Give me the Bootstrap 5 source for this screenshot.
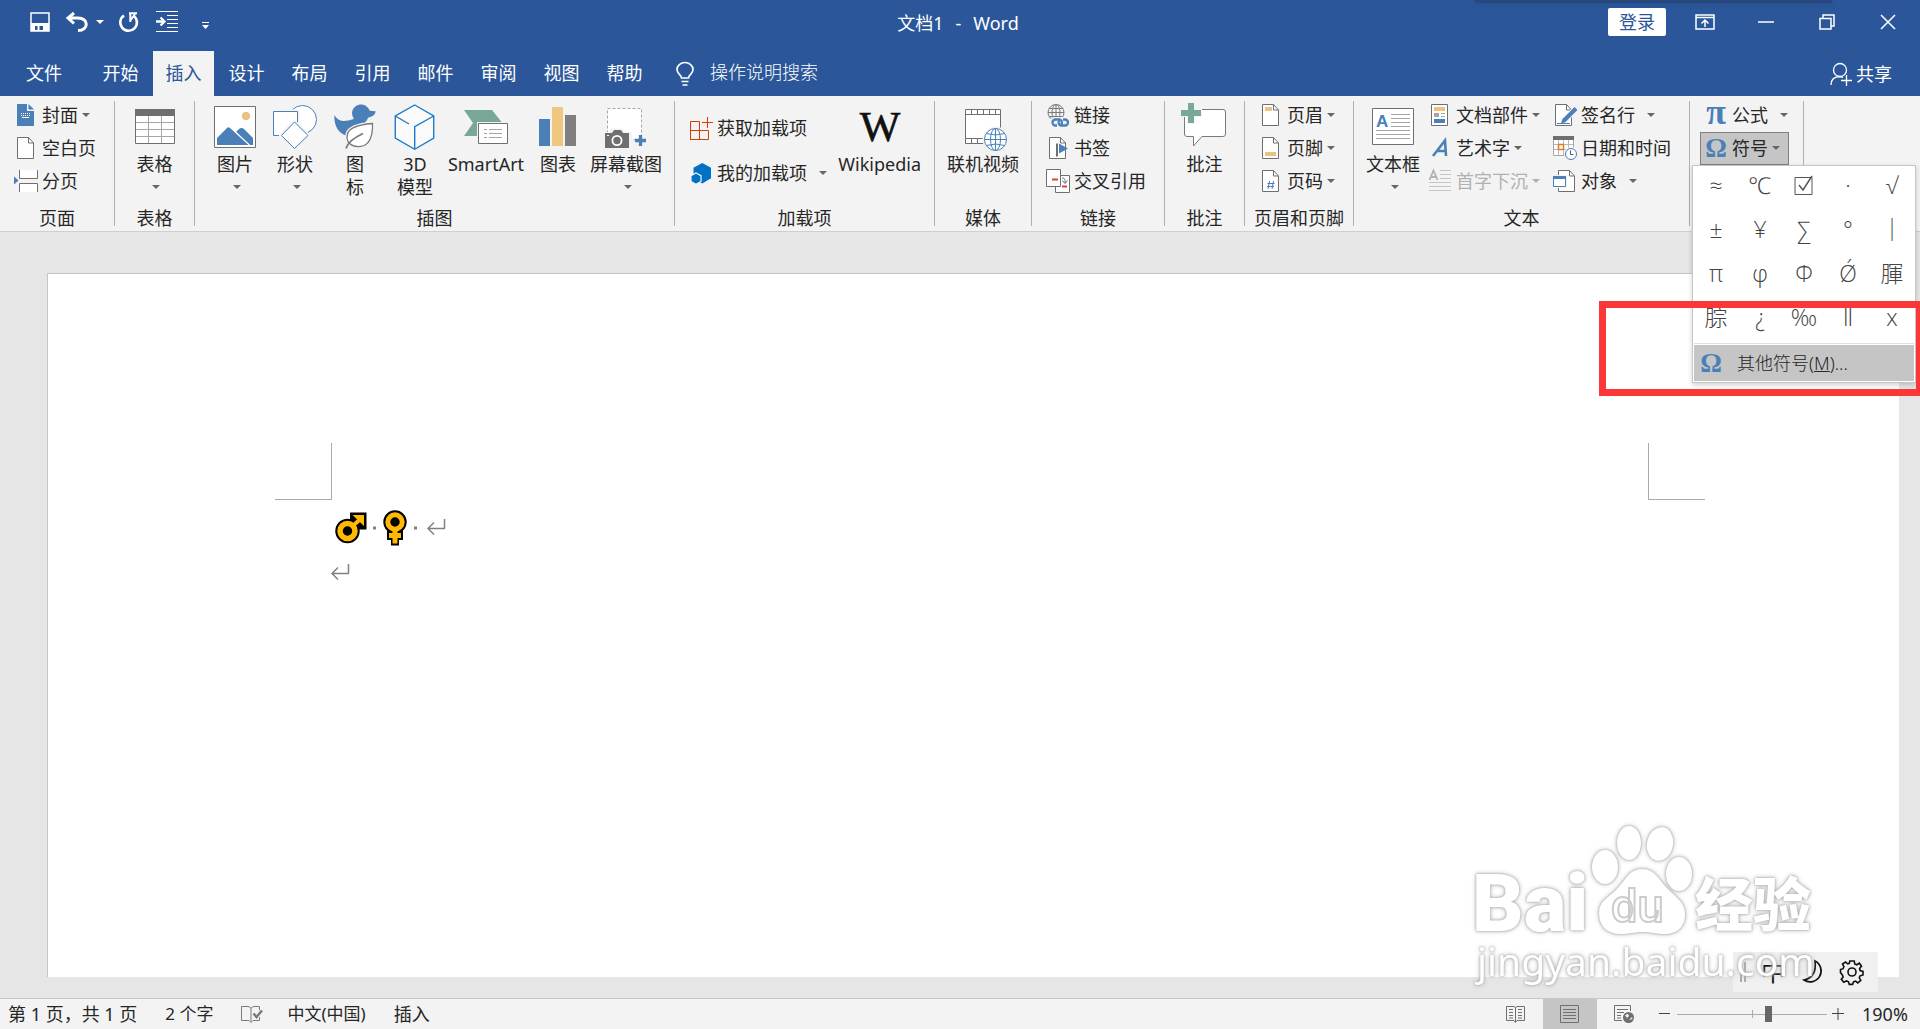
<!DOCTYPE html>
<html lang="zh-CN">
<head>
<meta charset="utf-8">
<meta name="viewport" content="width=device-width, initial-scale=1">
<title>文档1 - Word</title>
<link href="https://cdn.jsdelivr.net/npm/bootstrap@5.3.0/dist/css/bootstrap.min.css" rel="stylesheet">
<style>
:root{--word:#2b579a;--ink:#262626;--acc:#4a7fb8;--line:#6f6f6f}
body{font-family:"Noto Sans","Noto Sans CJK SC",sans-serif;font-size:18px;line-height:24px;color:var(--ink);background:#e6e6e6;overflow:hidden}
button{color:inherit;font:inherit}
svg{display:block;flex:none;overflow:visible}
.plain{background:none;border:0;padding:0}
.titlebar{background:var(--word);color:#fff;height:51px}
.quick{padding-left:30px;height:44px}
.caret{width:0;height:0;flex:none;border:4px solid transparent;border-top-color:#666;border-bottom:0}
.caret.light{border-top-color:#fff}
.doctitle{line-height:46px;padding-right:4px}
.signin{background:#fff;color:var(--word);border:0;border-radius:2px;width:58px;height:28px;padding:0;line-height:28px}
.winbtn{width:61px;height:44px}
.winbtns{padding-right:2px}
.topshade{position:absolute;top:0;right:88px;width:357px;height:3px;background:#26487c;box-shadow:0 0 4px #26487c}
.tabs{background:var(--word);color:#fff;height:45px}
.tabs .nav{gap:2px}
.tabs .nav-link{color:#fff;width:61px;padding:0;text-align:center;border-radius:0;line-height:45px}
.tabs .filetab{width:88px}
.tabs .nav-link.active{background:#f3f3f3;color:var(--word)}
.tellme{margin-left:5px}
.tellme input{background:none;border:0;color:#fff;padding:0 0 3px;width:180px;font-weight:300}
.tellme input::placeholder{color:#fff;opacity:1}
.share{margin-right:28px}
.ribbon{background:#f3f3f3;border-bottom:1px solid #cfcfcf;height:136px;padding-top:3px}
.grp{position:relative;border-right:1px solid transparent}
.grp::after{content:"";position:absolute;right:-1px;top:2px;height:125px;width:1px;background:#b0b0b0}
.gbody{height:111px}
.glabel{text-align:center;line-height:16px}
.cmd{display:flex;align-items:center;gap:4px;height:33px;padding-bottom:2px!important;white-space:nowrap}
.cmd svg{margin-top:2px}
.cmd.tall{height:45px}
.addins{padding-top:7px}
.cmd.off{color:#b1b1b1}
.cmd.off .caret{border-top-color:#b1b1b1}
.cmd.gapped .caret{margin-left:8px}
.big{display:flex;flex-direction:column;align-items:center;line-height:23px;white-space:nowrap}
.big .pic{height:54px;display:flex;align-items:center}
.big .caret{margin:9px 0 0 3px}
.wiki{margin:0 13px 0 auto}
.g-page{width:115px}.g-table{width:80px}.g-illus{width:480px}.g-addin{width:260px}.g-media{width:97px}
.g-link{width:133px}.g-note{width:80px}.g-head{width:109px}.g-text{width:336px}.g-sym{width:114px}
.w60{width:60px}.w62{width:62px}.w74{width:74px}.w82{width:82px}.w70{width:70px}
.in10{padding-left:10px}.in14{padding-left:14px}
.textcol{width:125px}
.symcmd{border:1px solid transparent;padding:0 8px 0 5px}
.symcmd.open{background:#c5c5c5;border-color:#808080}
.symmenu{position:absolute;left:-8px;top:33px;width:224px;z-index:5;background:#fff;border:1px solid #c6c6c6;padding:1px;box-shadow:0 2px 5px rgba(0,0,0,.18)}
.symgrid{display:grid;grid-template-columns:repeat(5,1fr);font-family:"Open Sans","Noto Sans","Noto Sans CJK SC",sans-serif}
.symgrid button{height:44px;font-size:23px;font-weight:300;color:#444;line-height:32px;padding-bottom:8px}
.moresym{border-top:1px solid #e1e1e1;padding-top:1px}
.moresym button{background:#c5c5c5;height:36px;width:100%;padding-left:7px;gap:14px;font-weight:300}
.redbox{position:absolute;left:1599px;top:301px;width:324px;height:95px;border:7px solid #fc3737;z-index:9;pointer-events:none}
.desk{padding:41px 21px 21px 47px}
.sheet{background:#fff;border:solid #c6c6c6;border-width:1px 0 0 1px;padding-top:169px}
.corners{padding:0 194px 0 227px}
.corner{width:57px;height:57px;border-bottom:1px solid #ababab;--bs-border-color:#ababab}
.typed{padding:5px 0 0 287px}
.para{height:45px;display:flex;align-items:center}
.outdent{margin-left:-4px}
.statusbar{background:#f3f3f3;border-top:1px solid #c6c6c6;height:31px;line-height:28px;padding-left:8px}
.statusbar .narrow{font-size:17px}
.gapl{margin-left:28px}
.view{width:54px;height:30px;display:flex;align-items:center;justify-content:center}
.view.active{background:#c5c5c5}
.zoomer{-webkit-appearance:none;appearance:none;width:150px;height:16px;margin:0 5px 0 6px;background:linear-gradient(#ababab,#ababab) 75px 4px/1px 8px no-repeat,linear-gradient(#ababab,#ababab) 0 8px/100% 1px no-repeat}
.zoomer::-webkit-slider-thumb{-webkit-appearance:none;width:7px;height:16px;background:#666}
.pct{width:76px;padding-left:18px}
.ime{position:absolute;right:42px;bottom:37px;width:145px;height:40px;background:#f0f0f0;color:#111}
.ime .bars{width:6px;height:20px;border:solid #aaa;border-width:0 2px;margin-left:7px}
.ime .zh{font-size:24px;margin:0 17px 0 15px}
.ime .gear{margin-left:14px}
.wm{position:absolute;right:80px;bottom:29px;pointer-events:none;filter:drop-shadow(0 0 1px #aaa) drop-shadow(0 0 2px #bbb)}
</style>
<script src="https://cdn.jsdelivr.net/npm/bootstrap@5.3.0/dist/js/bootstrap.bundle.min.js"></script>
</head>
<body class="vh-100 d-flex flex-column position-relative">
<svg width="0" height="0" class="position-absolute">
<symbol id="sheet" viewBox="0 0 24 23" overflow="visible"><path d="M3.5.5h11l5 5.5v15.500h-16z" fill="#fff" stroke="#6f6f6f"/><path d="M14.500.5v5.500h5" fill="none" stroke="#6f6f6f"/></symbol>
<symbol id="ret" viewBox="0 0 19 17"><path d="M17.500 0v9.500M1 9.500h17M7 3.500l-6 6 6 6" fill="none" stroke="#808080" stroke-width="1.500"/></symbol>
</svg>

<header class="titlebar d-flex align-items-start position-relative">
  <div class="topshade"></div>
  <div class="quick d-flex align-items-center gap-3 flex-fill w-25">
    <button class="plain" aria-label="保存"><svg width="20" height="20"><path d="M1 1h18v18H1z" fill="none" stroke="#fff" stroke-width="1.500"/><path d="M1 11h18v8H1z" fill="#fff"/><path d="M5 14h8v4H5z" fill="#2b579a"/><path d="M7.500 14h2v4h-2z" fill="#fff"/></svg></button>
    <div class="d-flex align-items-center gap-2">
    <button class="plain" aria-label="撤消"><svg width="22" height="20"><path d="M8 1L2 6l6 5.500M2.500 6h9.500c11 0 11 12.500 0 12.500" fill="none" stroke="#fff" stroke-width="3"/></svg></button><span class="caret light"></span></div>
    <button class="plain" aria-label="重复"><svg width="20" height="20"><path d="M4 3.500a8.300 8.300 0 1 0 9.500.2" fill="none" stroke="#fff" stroke-width="2.600"/><path d="M9 1.300h8M10.300 1v9M10 9l5-7" fill="none" stroke="#fff" stroke-width="2"/></svg></button>
    <button class="plain" aria-label="缩进"><svg width="22" height="22"><path d="M0 .5h22M11 4.500h11M11 8.500h11M11 12.500h11M11 16.500h11M0 20.500h22" stroke="#fff"/><path d="M0 10.500h8M4.500 6.500l4 4-4 4" fill="none" stroke="#fff" stroke-width="2.300"/></svg></button>
    <button class="plain ms-2 mt-2" aria-label="自定义快速访问工具栏"><svg width="8" height="8"><path d="M0 .5h7" stroke="#fff"/><path d="M0 3h7L3.500 7z" fill="#fff"/></svg></button>
  </div>
  <div class="doctitle d-flex gap-2"><span>文档1</span><span class="px-1">-</span><span>Word</span></div>
  <div class="winbtns d-flex justify-content-end flex-fill w-25">
    <button class="signin me-2 mt-2">登录</button>
    <button class="plain winbtn d-flex justify-content-center align-items-center" aria-label="功能区显示选项"><svg width="20" height="16"><path d="M1 1h18v14H1zM1 3.500h18M10 13V6.500M6.500 9.500L10 6l3.500 3.500" fill="none" stroke="#fff" stroke-width="1.500"/></svg></button>
    <button class="plain winbtn d-flex justify-content-center align-items-center" aria-label="最小化"><svg width="16" height="2"><path d="M0 1h16" stroke="#fff" stroke-width="1.500"/></svg></button>
    <button class="plain winbtn d-flex justify-content-center align-items-center" aria-label="还原"><svg width="16" height="16"><path d="M1 4.500h11V15H1zM4 4V1h11v11h-3" fill="none" stroke="#fff" stroke-width="1.500"/></svg></button>
    <button class="plain winbtn d-flex justify-content-center align-items-center" aria-label="关闭"><svg width="16" height="16"><path d="M1 1l14 14M15 1L1 15" stroke="#fff" stroke-width="1.500"/></svg></button>
  </div>
</header>

<nav class="tabs d-flex align-items-center">
  <div class="nav flex-nowrap">
    <a class="nav-link filetab" href="#">文件</a><a class="nav-link" href="#">开始</a><a class="nav-link active" href="#">插入</a><a class="nav-link" href="#">设计</a><a class="nav-link" href="#">布局</a><a class="nav-link" href="#">引用</a><a class="nav-link" href="#">邮件</a><a class="nav-link" href="#">审阅</a><a class="nav-link" href="#">视图</a><a class="nav-link" href="#">帮助</a>
  </div>
  <div class="tellme d-flex align-items-center gap-3 ps-3">
    <svg width="18" height="24"><path d="M5.500 16c0-3-4.500-4-4.500-8.500a8 7 0 0 1 16 0c0 4.500-4.500 5.500-4.500 8.500zM5.500 19.500h7M6.500 23h5" fill="none" stroke="#fff" stroke-width="1.700"/></svg>
    <input type="text" placeholder="操作说明搜索" aria-label="操作说明搜索">
  </div>
  <button class="plain share ms-auto d-flex align-items-center gap-1"><svg width="22" height="24"><circle cx="10" cy="8" r="6.500" fill="none" stroke="#fff" stroke-width="1.300"/><path d="M1 23c0-5 3-8 8-8.500 2 0 3 .5 4 1M16.500 13v11M11 18.500h11" fill="none" stroke="#fff" stroke-width="1.300"/></svg>共享</button>
</nav>

<section class="ribbon d-flex align-items-start">
  <div class="grp g-page"><div class="gbody in14">
    <button class="plain cmd"><svg width="24" height="23"><path d="M3 0h10v7h7v15H3z" fill="#4a7fb8"/><path d="M14.500 0l5.500 5.500h-5.500z" fill="#4a7fb8"/><path d="M7 9.500h9M7 11.500h9" stroke="#fff" stroke-dasharray="1 1"/><path d="M8 13.500h7" stroke="#fff"/></svg>封面<span class="caret"></span></button>
    <button class="plain cmd"><svg width="24" height="23"><use href="#sheet"/></svg>空白页</button>
    <button class="plain cmd"><svg width="24" height="23"><path d="M0 6.500l4.500 4-4.500 4z" fill="#4a7fb8"/><path d="M5.500 0v8.500h18V0M5.500 22v-8.500h18V22" fill="#fff" stroke="#6f6f6f"/></svg>分页</button>
  </div><div class="glabel">页面</div></div>

  <div class="grp g-table"><div class="gbody">
    <button class="plain big mx-auto"><span class="pic"><svg width="46" height="46"><path d="M3.500 6.500h39v34h-39z" fill="#fff" stroke="#6f6f6f"/><path d="M3 6h40v7H3z" fill="#6f6f6f"/><path d="M16.500 13v27M29.500 13v27M4 19.500h38M4 26.500h38M4 33.500h38" stroke="#a6a6a6"/></svg></span>表格<span class="caret"></span></button>
  </div><div class="glabel">表格</div></div>

  <div class="grp g-illus"><div class="gbody in10 d-flex">
    <button class="plain big w60"><span class="pic"><svg width="46" height="46"><path d="M2.500 3.500h41v41h-41z" fill="#fff" stroke="#6f6f6f"/><circle cx="34" cy="13" r="4.200" fill="#eac282"/><path d="M5 42v-7l10-10q1.500-1.500 3 0l18.500 17z" fill="#4a7fb8"/><path d="M24 29l3-3q2.500-2 5 0l9 9v7h-3z" fill="#4a7fb8"/><path d="M24 29l13.500 13" stroke="#fff"/></svg></span>图片<span class="caret"></span></button>
    <button class="plain big w60"><span class="pic"><svg width="46" height="46"><circle cx="30.500" cy="16.500" r="14" fill="#fff" stroke="#4a7fb8"/><path d="M1.500 8.500h24v24h-24z" fill="#fff" stroke="#f3f3f3" stroke-width="4"/><path d="M1.500 8.500h24v24h-24z" fill="#fff" stroke="#4a7fb8"/><path d="M22.500 19L36 32.500 22.500 45.500 9.500 32.500z" fill="#fff" stroke="#f3f3f3" stroke-width="4"/><path d="M22.500 19L36 32.500 22.500 45.500 9.500 32.500z" fill="#fff" stroke="#4a7fb8"/></svg></span>形状<span class="caret"></span></button>
    <button class="plain big w60"><span class="pic"><svg width="46" height="46"><path d="M20 10a9 9 0 0 1 17.500-2.500q3 1 6.300.8-1 5-7.800 6.500-.5 2-2.500 4L27 33H15Q2 29 2.300 12q3 5.500 9 6 5 0 10.500-2Q20 13 20 10z" fill="#4a7fb8"/><path d="M40.500 20.500q-23 2-25 10.500-1.500 6 2 9.500 6 5 14.500 2 9-4 8.500-22z" fill="#fff" stroke="#f3f3f3" stroke-width="4"/><path d="M40.500 20.500q-23 2-25 10.500-1.500 6 2 9.500 6 5 14.500 2 9-4 8.500-22z" fill="#fff" stroke="#7a7a7a" stroke-width="1.300"/><path d="M14 45.500q2-8 17-15" fill="none" stroke="#7a7a7a" stroke-width="1.800"/></svg></span><span>图<br>标</span></button>
    <button class="plain big w60"><span class="pic"><svg width="46" height="46"><path d="M22.700 2l19 11v22l-19 11.300L3.300 35V13z" fill="#fafafa" stroke="#1e7cc8" stroke-width="1.400"/><path d="M41.700 13l-19 10.700V46M3.300 13L17 21" fill="none" stroke="#1e7cc8" stroke-width="1.400"/></svg></span><span>3D<br>模型</span></button>
    <button class="plain big w82"><span class="pic"><svg width="46" height="46"><path d="M1 7h28l10 12.500L29 33H1l9-13z" fill="#78a896"/><path d="M15.500 20.500h29v20h-29z" fill="#fff" stroke="#f3f3f3" stroke-width="3"/><path d="M15.500 20.500h29v20h-29z" fill="#fff" stroke="#6f6f6f"/><path d="M21 26.500h3M26 26.500h13M21 30.500h3M26 30.500h13M21 34.500h3M26 34.500h13" stroke="#a6a6a6"/></svg></span>SmartArt</button>
    <button class="plain big w62"><span class="pic"><svg width="46" height="46"><path d="M4 16h11v27H4z" fill="#4a7fb8"/><path d="M17 4h11v39H17z" fill="#efc77e"/><path d="M30 12h11v31H30z" fill="#7f7f7f"/></svg></span>图表</button>
    <button class="plain big w74"><span class="pic"><svg width="46" height="46"><path d="M4.500 5.500h34v31h-34z" fill="#fff" stroke="#a6a6a6" stroke-dasharray="3 2"/><path d="M1 29h5l2-3.500h12l2 3.500h7v17H1z" fill="#f3f3f3"/><path d="M2 30h7l2-3h7l2 3h6v15H2z" fill="#6f6f6f"/><circle cx="14" cy="37.500" r="4.600" fill="none" stroke="#fff" stroke-width="1.800"/><path d="M4 32.500h2" stroke="#fff"/><path d="M32 37.500h11M37.500 32v11" stroke="#4a7fb8" stroke-width="3.300"/></svg></span>屏幕截图<span class="caret"></span></button>
  </div><div class="glabel">插图</div></div>

  <div class="grp g-addin"><div class="gbody in14 d-flex">
    <div class="addins">
      <button class="plain cmd tall"><svg width="24" height="24"><path d="M1.500 4.500h9v18h-9zM1.500 13.500h18v9h-18z" fill="none" stroke="#d83b01"/><path d="M18.500 0v11M13 5.500h11" stroke="#d83b01"/></svg>获取加载项</button>
      <button class="plain cmd tall gapped"><svg width="24" height="24"><path d="M13.300 1l8.700 4.700v10.600L13.300 21.500 4.500 16.500V5.700z" fill="#0072c6"/><path d="M7 11l5 2.700v5.800L7 22.300l-5-2.800v-5.800z" fill="#0072c6" stroke="#f3f3f3" stroke-width="1.200"/></svg>我的加载项<span class="caret"></span></button>
    </div>
    <button class="plain big wiki"><span class="pic"><svg width="46" height="46"><text x="23" y="38" text-anchor="middle" font-family="Liberation Serif" font-size="43" fill="#111" stroke="#111" stroke-width=".6">W</text></svg></span>Wikipedia</button>
  </div><div class="glabel">加载项</div></div>

  <div class="grp g-media"><div class="gbody">
    <button class="plain big mx-auto"><span class="pic"><svg width="46" height="46"><path d="M5.500 6.500h35v34h-35z" fill="#fff" stroke="#6f6f6f"/><path d="M5 11.500h36M5 35.500h36M11.500 6v5M17.500 6v5M23.500 6v5M29.500 6v5M35.500 6v5M11.500 36v5M17.500 36v5" stroke="#6f6f6f"/><circle cx="35.500" cy="36.500" r="13" fill="#f3f3f3"/><g fill="#fff" stroke="#4a7fb8"><circle cx="35.500" cy="36.500" r="11"/><ellipse cx="35.500" cy="36.500" rx="5" ry="11"/><path d="M24.500 36.500h22M35.500 25.500v22M26.500 30.500q9 3 18 0M26.500 42.500q9-3 18 0" fill="none"/></g></svg></span>联机视频</button>
  </div><div class="glabel">媒体</div></div>

  <div class="grp g-link"><div class="gbody in14">
    <button class="plain cmd"><svg width="24" height="23"><g fill="none" stroke="#7a7a7a"><circle cx="10" cy="8.500" r="8"/><ellipse cx="10" cy="8.500" rx="4" ry="8"/><path d="M2 8.500h16M10 .5v16M3 4.500h14M3 12.500h14"/></g><rect x="4" y="13" width="20" height="11" rx="5" fill="#f3f3f3"/><path d="M11 21.500H9.500a3 3 0 0 1 0-6H14a3 3 0 0 1 1 5M17 15.500h2a3 3 0 0 1 0 6h-4.500a3 3 0 0 1-1-5" fill="none" stroke="#4a7fb8" stroke-width="2.300"/></svg>链接</button>
    <button class="plain cmd"><svg width="24" height="23"><use href="#sheet"/><path d="M11 6.500v13" stroke="#6f6f6f" stroke-width="2"/><path d="M13 6.500l9 5-9 5z" fill="#4a7fb8"/></svg>书签</button>
    <button class="plain cmd"><svg width="24" height="23"><path d="M9.500 5.500h14v17h-14z" fill="#fff" stroke="#6f6f6f"/><path d="M.5-.5h14v17H.5z" fill="#fff" stroke="#6f6f6f"/><path d="M6 9.500h6M16 16.500h5" stroke="#d2472f" stroke-width="2"/><path d="M16 8q4 0 3 5M16.500 10.500l2.500 3 2.500-3" fill="none" stroke="#6f6f6f"/></svg>交叉引用</button>
  </div><div class="glabel">链接</div></div>

  <div class="grp g-note"><div class="gbody">
    <button class="plain big mx-auto"><span class="pic"><svg width="46" height="46"><path d="M5 6.500h36q2.500 0 2.500 2.500v22q0 2.500-2.500 2.500H20L11.500 43v-9.500H5q-2.500 0-2.500-2.500V9q0-2.500 2.500-2.500z" fill="#fff" stroke="#7a7a7a"/><path d="M9 0v21M-2 10h22" stroke="#f3f3f3" stroke-width="8"/><path d="M9 0v20M-1 10h20" stroke="#78a896" stroke-width="6"/></svg></span>批注</button>
  </div><div class="glabel">批注</div></div>

  <div class="grp g-head"><div class="gbody in14">
    <button class="plain cmd"><svg width="24" height="23"><use href="#sheet"/><path d="M6 3h7v4H6z" fill="#eac282"/></svg>页眉<span class="caret"></span></button>
    <button class="plain cmd"><svg width="24" height="23"><use href="#sheet"/><path d="M6 15h11v4H6z" fill="#eac282"/></svg>页脚<span class="caret"></span></button>
    <button class="plain cmd"><svg width="24" height="23"><use href="#sheet"/><path d="M10.500 11l-1.500 8M14.500 11L13 19M8.500 13.500h7M8 16.500h7" stroke="#4a7fb8"/></svg>页码<span class="caret"></span></button>
  </div><div class="glabel">页眉和页脚</div></div>

  <div class="grp g-text"><div class="gbody d-flex ps-1">
    <button class="plain big w70"><span class="pic"><svg width="46" height="46"><path d="M2.500 5.500h41v36h-41z" fill="#fff" stroke="#6f6f6f"/><text x="6" y="24" font-family="Liberation Sans" font-weight="700" font-size="17" fill="#4a7fb8">A</text><path d="M21 11.500h19M21 15.500h19M21 19.500h19M21 23.500h19M6 27.500h34M6 31.500h34M6 35.500h34" stroke="#a6a6a6"/></svg></span>文本框<span class="caret"></span></button>
    <div class="textcol">
      <button class="plain cmd"><svg width="24" height="23"><path d="M3.500.5h16v21h-16z" fill="#fff" stroke="#6f6f6f"/><path d="M6 3h11v4H6z" fill="#eac282"/><path d="M6 9h5v4H6z" fill="#a6a6a6"/><path d="M13 9.500h4M13 12.500h4" stroke="#a6a6a6"/><path d="M6 15h11v4H6z" fill="#4a7fb8"/></svg>文档部件<span class="caret"></span></button>
      <button class="plain cmd"><svg width="24" height="23"><path d="M5 19L17 3.500 18 19M9.500 14h8" fill="none" stroke="#4a7fb8" stroke-width="2.600"/></svg>艺术字<span class="caret"></span></button>
      <button class="plain cmd off" disabled><svg width="24" height="23"><path d="M1.500 10L5.500.5 9.500 10M3 7h5" fill="none" stroke="#b1b1b1" stroke-width="1.800"/><path d="M12 .5h11M12 4.500h11M12 8.500h11M1 12.500h22M1 16.500h22M1 20.500h22" stroke="#c6c6c6"/></svg>首字下沉<span class="caret"></span></button>
    </div>
    <div>
      <button class="plain cmd gapped"><svg width="24" height="23"><path d="M2.500.5h11l5 5.500v15.500h-16z" fill="#fff" stroke="#6f6f6f"/><path d="M13.500.5v5.500h5" fill="none" stroke="#6f6f6f"/><path d="M4 19.500h13" stroke="#4a7fb8"/><path d="M22.500 5L11 17" stroke="#f3f3f3" stroke-width="6"/><path d="M23 4.500L11 16.500" stroke="#4a7fb8" stroke-width="4"/><path d="M8 19.500l1.500-5 3.500 3.500z" fill="#4a7fb8"/></svg>签名行<span class="caret"></span></button>
      <button class="plain cmd"><svg width="24" height="23"><path d="M.5.500h20v18H.5z" fill="#fff" stroke="#a6a6a6"/><path d="M0-1h21v4H0z" fill="#6f6f6f"/><path d="M5.500 3v15M10.500 3v15M15.500 3v15M1 7.500h19M1 12.500h19" stroke="#b8b8b8"/><path d="M5.500 7.500h5v5h-5z" fill="#fff" stroke="#e07b28" stroke-width="1.500"/><circle cx="18" cy="17" r="7" fill="#f3f3f3"/><circle cx="18" cy="17" r="5.500" fill="#fff" stroke="#4a7fb8"/><path d="M17.500 13.500v4h3" fill="none" stroke="#555"/></svg>日期和时间</button>
      <button class="plain cmd gapped"><svg width="24" height="23"><path d="M5.500.5h11l5 5.500v15.500h-16z" fill="#fff" stroke="#6f6f6f"/><path d="M16.500.5v5.500h5" fill="none" stroke="#6f6f6f"/><path d="M-1 5h15v13H-1z" fill="#f3f3f3"/><path d="M.5 6.500h12v10H.5z" fill="#fff" stroke="#4a7fb8"/><path d="M0 6h13v3H0z" fill="#4a7fb8"/></svg>对象<span class="caret"></span></button>
    </div>
  </div><div class="glabel">文本</div></div>

  <div class="grp g-sym"><div class="gbody in10">
    <button class="plain cmd symcmd gapped"><svg width="22" height="23"><text x="10" y="20" text-anchor="middle" font-family="Liberation Serif" font-weight="700" font-size="36" fill="#4a7fb8">π</text></svg>公式<span class="caret"></span></button>
    <div class="position-relative">
      <button class="cmd symcmd open"><svg width="22" height="23"><text x="10" y="20" text-anchor="middle" font-family="Liberation Serif" font-weight="700" font-size="27" fill="#4a7fb8">Ω</text></svg>符号<span class="caret"></span></button>
      <div class="symmenu">
        <div class="symgrid">
          <button class="plain">≈</button><button class="plain">℃</button><button class="plain" aria-label="勾选框"><svg class="mx-auto" width="20" height="20"><path d="M1 2.500h17v17H1z" fill="none" stroke="#555"/><path d="M5 10l4 5L18 1" fill="none" stroke="#555" stroke-width="1.500"/></svg></button><button class="plain">·</button><button class="plain">√</button>
          <button class="plain">±</button><button class="plain">¥</button><button class="plain">∑</button><button class="plain">°</button><button class="plain">│</button>
          <button class="plain">π</button><button class="plain">φ</button><button class="plain">Φ</button><button class="plain">Ǿ</button><button class="plain">腪</button>
          <button class="plain">腙</button><button class="plain">¿</button><button class="plain">‰</button><button class="plain">ǁ</button><button class="plain">x</button>
        </div>
        <div class="moresym"><button class="plain d-flex align-items-center"><svg width="22" height="23"><text x="10" y="20" text-anchor="middle" font-family="Liberation Serif" font-weight="700" font-size="27" fill="#4a7fb8">Ω</text></svg><span>其他符号(<u>M</u>)...</span></button></div>
      </div>
    </div>
  </div></div>
</section>

<main class="desk flex-fill d-flex">
  <div class="sheet flex-fill">
    <div class="corners d-flex justify-content-between"><div class="corner border-end"></div><div class="corner border-start"></div></div>
    <div class="typed">
      <div class="para">
        <svg width="32" height="34"><g stroke-linejoin="miter"><circle cx="12.500" cy="20" r="8" fill="none" stroke="#000" stroke-width="8.500"/><path d="M17 15l9-8" stroke="#000" stroke-width="9"/><path d="M15 1.500h16.500v17H24L15 9z" fill="#000"/><circle cx="12.500" cy="20" r="7.500" fill="#000" stroke="#ffb900" stroke-width="5.500"/><path d="M17 15.500l8-7" stroke="#ffb900" stroke-width="4"/><path d="M17.500 4H29v11z" fill="#ffb900"/></g></svg>
        <svg width="16" height="34"><path d="M6 15.500h3v3H6z" fill="#808080"/></svg>
        <svg width="24" height="36"><circle cx="12" cy="12" r="11.700" fill="#000"/><path d="M4 20h16v10h-4v5.500H8V30H4z" fill="#000"/><circle cx="12" cy="12" r="7.200" fill="#000" stroke="#ffb900" stroke-width="5"/><path d="M12 19v14.500M6 25.500h12" stroke="#ffb900" stroke-width="5"/></svg>
        <svg width="20" height="34"><path d="M7 15.500h3v3H7z" fill="#808080"/></svg>
        <svg width="19" height="17"><use href="#ret"/></svg>
      </div>
      <div class="para"><svg class="outdent" width="19" height="17"><use href="#ret"/></svg></div>
    </div>
  </div>
</main>

<footer class="statusbar d-flex align-items-center">
  <span>第 1 页，共 1 页</span><span class="gapl narrow">2 个字</span>
  <svg class="gapl" width="22" height="17"><path d="M10 2.500Q9 .5 7 .5H.5v14H8l2 2 2-2h6.500V11M10 2.500Q11 .5 13 .5h5.500V4M10 2.500v13" fill="none" stroke="#7a7a7a"/><path d="M12.500 7.500l3 3.500L21 4.500" fill="none" stroke="#7a7a7a" stroke-width="2.500"/></svg>
  <span class="ms-4 narrow">中文(中国)</span><span class="gapl">插入</span>
  <div class="ms-auto d-flex align-items-center">
    <button class="plain view" aria-label="阅读视图"><svg width="20" height="18"><path d="M.5 1.500H8l1.500 1 1.500-1h7.500v14H11l-1.500 2-1.500-2H.5zM9.500 2v15M3 4.500h4M3 7.500h4M3 10.500h4M3 13h4M12 4.500h4M12 7.500h4M12 10.500h4M12 13h4" fill="none" stroke="#6f6f6f"/></svg></button>
    <button class="plain view active" aria-label="页面视图"><svg width="20" height="18"><path d="M.5.5h18v17H.5zM3 4.500h13M3 7.500h13M3 10.500h13M3 13.500h13" fill="none" stroke="#6f6f6f"/></svg></button>
    <button class="plain view" aria-label="Web 版式视图"><svg width="20" height="18"><path d="M8 15.500H.5v-15h16V6M3 4.500h11M3 7.500h7M3 10.500h4M3 13h4" fill="none" stroke="#6f6f6f"/><circle cx="14.500" cy="12.500" r="5.500" fill="#6f6f6f"/><path d="M11 10l3-1 1 2-2 2zM15 15l3-3 .5 2z" fill="#f3f3f3"/></svg></button>
    <button class="plain ms-1 ps-1" aria-label="缩小"><svg width="12" height="12"><path d="M0 5.500h11" stroke="#444"/></svg></button>
    <input class="zoomer" type="range" min="0" max="200" value="123" aria-label="显示比例">
    <button class="plain" aria-label="放大"><svg width="12" height="12"><path d="M0 5.500h12M6 0v12" stroke="#444"/></svg></button>
    <span class="pct">190%</span>
  </div>
</footer>

<div class="ime d-flex align-items-center"><span class="bars"></span><span class="zh">中</span>
  <svg width="24" height="24"><path d="M13 1a11 11 0 1 1-11 19Q15 17 13 1z" fill="none" stroke="#111" stroke-width="1.700"/></svg>
  <svg class="gear" width="24" height="24"><path d="M9.800 1h4.400l.6 2.900 2 .9 2.600-1.600 2.100 3-1.900 2.200.5 2.100 2.900.9v3.500l-2.900.9-.8 2 1.500 2.600-3 2.500-2.200-1.800-2.100.8-.9 2.500H9.300l-.8-2.600-2-.9-2.700 1.300-2.500-3 1.800-2.200-.7-2L.5 12.800V9.500l2.600-.8.8-2.200L2.500 4l3-2 2.200 1.800 1.600-.5z" fill="none" stroke="#111" stroke-width="1.600"/><circle cx="12" cy="12" r="4" fill="none" stroke="#111" stroke-width="1.600"/></svg>
</div>

<svg class="wm" width="370" height="185" viewBox="1470 815 370 185" fill="#fff" aria-hidden="true">
  <text x="1472" y="931" font-family="Roboto" font-weight="900" font-size="80">Bai</text>
  <ellipse cx="1605" cy="867" rx="13" ry="17"/><ellipse cx="1629" cy="843" rx="12" ry="17"/><ellipse cx="1660" cy="844" rx="13" ry="17" transform="rotate(12 1660 844)"/><ellipse cx="1679" cy="874" rx="13" ry="17"/>
  <path d="M1642 869c14 0 17 12 27 21 8 8 16 13 16 24 0 14-9 20-20 20-9 0-14-2-22-2s-14 2-23 2c-13 0-21-8-21-21 0-12 9-15 17-23 9-9 13-21 26-21z"/>
  <text x="1611" y="922" font-family="Roboto" font-weight="500" font-size="47" stroke="#ccc" stroke-width="2">du</text>
  <text x="1695" y="926" font-family="Noto Sans CJK SC" font-weight="900" font-size="58">经验</text>
  <text x="1477" y="976" font-family="Noto Sans" font-size="39">jingyan.baidu.com</text>
</svg>
<div class="redbox"></div>
</body>
</html>
